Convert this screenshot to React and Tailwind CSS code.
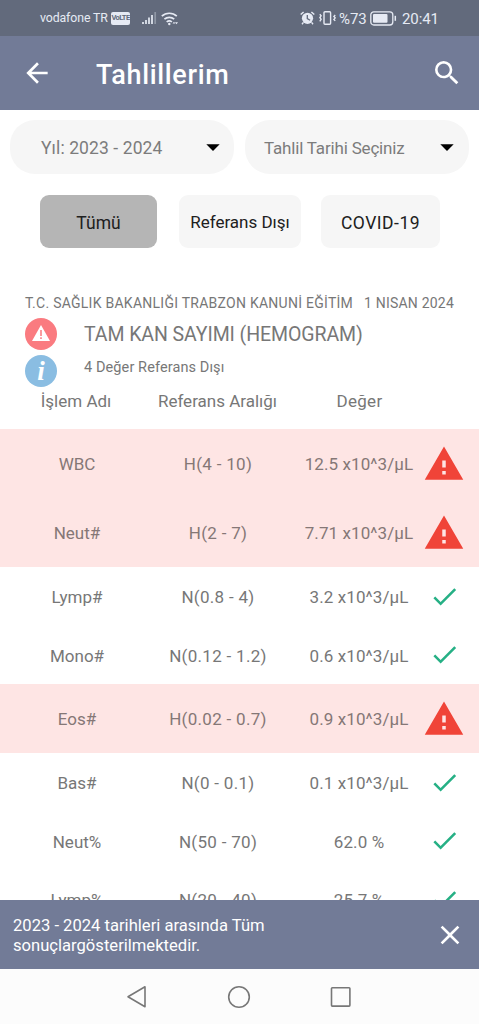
import React from 'react';
import { MdArrowBack, MdArrowDropDown, MdCheck, MdClose, MdSearch, MdWarning } from 'react-icons/md';

const results = [
  { name: 'WBC', range: 'H(4 - 10)', value: '12.5 x10^3/µL', alert: true },
  { name: 'Neut#', range: 'H(2 - 7)', value: '7.71 x10^3/µL', alert: true },
  { name: 'Lymp#', range: 'N(0.8 - 4)', value: '3.2 x10^3/µL' },
  { name: 'Mono#', range: 'N(0.12 - 1.2)', value: '0.6 x10^3/µL' },
  { name: 'Eos#', range: 'H(0.02 - 0.7)', value: '0.9 x10^3/µL', alert: true },
  { name: 'Bas#', range: 'N(0 - 0.1)', value: '0.1 x10^3/µL' },
  { name: 'Neut%', range: 'N(50 - 70)', value: '62.0 %' },
  { name: 'Lymp%', range: 'N(20 - 40)', value: '25.7 %' },
];

const StatusBar = () => (
  <div className="h-9 shrink-0 bg-[#626a7c] text-[#e6eaf4] flex items-center justify-between pl-10 pr-[40px]">
    <div className="flex items-center">
      <span className="text-[12.3px] w-[69px] tracking-[-0.1px] whitespace-nowrap pt-px">vodafone TR</span>
      <span className="ml-[2px] w-[19px] h-[13px] rounded-[2px] bg-[#e6eaf4] text-[#626a7c] text-[7.5px] font-bold tracking-[-0.6px] flex items-center justify-center">VoLTE</span>
      <svg className="ml-3 w-[15px] h-[14px]" viewBox="0 0 15 14" fill="none" stroke="currentColor" strokeWidth="1.7">
        <path d="M1 13v-2M4 13V9M7 13V6.5M10 13V4" />
        <path d="M13.2 13V1" opacity="0.35" />
      </svg>
      <svg className="ml-1 w-[18px] h-[15px]" viewBox="0 0 18 15" fill="none" stroke="currentColor" strokeWidth="1.7">
        <path d="M.8 5.2a11 11 0 0 1 15 0M3.4 8.2a7.2 7.2 0 0 1 9.8 0M5.7 11a3.8 3.8 0 0 1 5.2 0" />
        <circle cx="8.3" cy="13" r="1.2" fill="currentColor" stroke="none" />
        <path d="M11.5 12.6l1.5-1.8 1.4 1.8zM14 11.2h3l-1.5 2z" fill="currentColor" stroke="none" />
      </svg>
    </div>
    <div className="flex items-center">
      <svg className="w-[15px] h-[14px]" viewBox="0 0 15 14" fill="none" stroke="currentColor">
        <circle cx="7.5" cy="7.3" r="5.6" fill="currentColor" stroke="none" />
        <path d="M.7 3.6L3.6.9M14.3 3.6L11.4.9M3.4 11.4L2 13.2M11.6 11.4l1.4 1.8" strokeWidth="1.4" />
        <path d="M7.3 4v3.6l2.8 1.6" stroke="#626a7c" strokeWidth="1.3" />
      </svg>
      <svg className="ml-1 w-[17px] h-[14px]" viewBox="0 0 17 14" fill="none" stroke="currentColor" strokeWidth="1.4">
        <rect x="5" y=".8" width="6.6" height="12.4" rx="1" />
        <path d="M.8 3.2l1.3 1.6L.9 6.5l1.2 1.8-1.3 2M16.2 4l-1.3 1.4 1.3 1.5-1.3 1.5 1.3 1.5" />
      </svg>
      <span className="ml-[3px] w-[29px] text-[15px] tracking-[-0.1px] pt-[2px]">%73</span>
      <svg className="ml-[2px] w-[27px] h-[15px]" viewBox="0 0 27 15" fill="none" stroke="currentColor">
        <rect x=".8" y=".8" width="22" height="13.2" rx="3" strokeWidth="1.3" />
        <rect x="3" y="3" width="14.5" height="8.8" rx="1" fill="currentColor" stroke="none" />
        <path d="M25.3 4.8v5" strokeWidth="1.5" />
      </svg>
      <span className="ml-[5px] w-[37px] text-[15px] tracking-[-0.1px] pt-[2px]">20:41</span>
    </div>
  </div>
);

const Header = () => (
  <header className="h-[74px] shrink-0 bg-[#727b97] text-white flex items-center pl-[21px] pr-4">
    <MdArrowBack size={32} />
    <h1 className="ml-[43px] flex-1 text-[27px] font-medium tracking-[0.65px] leading-none pt-[5px]">Tahlillerim</h1>
    <MdSearch size={32} />
  </header>
);

const SelectBox = ({ label, className }) => (
  <div className={`w-[224px] h-[54px] rounded-[25px] bg-[#f6f6f6] flex items-center justify-between text-[#7c7c7c] whitespace-nowrap ${className}`}>
    <span className="pt-[3px]">{label}</span>
    <MdArrowDropDown size={32} className="text-black" />
  </div>
);

const ResultRow = ({ name, range, value, alert }) => (
  <div
    className={`grid grid-cols-[154px_128px_154px_16px] items-center text-center text-[17px] shrink-0 ${
      alert ? 'h-[69px] bg-[#fee5e4] text-[#857776]' : 'h-[58.5px] text-[#777]'
    }`}
  >
    <span className="pt-[3px]">{name}</span>
    <span className="pt-[3px] tracking-[0.3px]">{range}</span>
    <span className="pt-[3px] tracking-[0.1px]">{value}</span>
    <span className="flex justify-center">
      {alert ? (
        <MdWarning size={42} className="shrink-0 text-[#f04438]" />
      ) : (
        <MdCheck size={31} className="shrink-0 text-[#26b085]" />
      )}
    </span>
  </div>
);

const App = () => {
  return (
    <div className="w-[479px] h-[1024px] overflow-hidden bg-white flex flex-col font-['Roboto',sans-serif]">
      <StatusBar />
      <Header />

      <main className="h-[790px] shrink-0 overflow-hidden flex flex-col">
        <div className="flex gap-[11px] px-[10px] pt-[10px]">
          <SelectBox label="Yıl: 2023 - 2024" className="pl-[31px] pr-[5px] text-[17.5px] tracking-[0.1px]" />
          <SelectBox label="Tahlil Tarihi Seçiniz" className="pl-[19px] pr-[6px] text-[17px] tracking-[-0.18px]" />
        </div>

        <div className="flex pl-10 pt-[21px] text-[17.5px] text-[#202020]">
          <button className="w-[117px] h-[53px] pt-[3px] rounded-[9px] bg-[#b5b5b5]">Tümü</button>
          <button className="ml-[22px] w-[122px] h-[53px] pt-[3px] rounded-[9px] bg-[#f6f6f6] text-[17px] whitespace-nowrap">Referans Dışı</button>
          <button className="ml-5 w-[119px] h-[53px] pt-[3px] rounded-[9px] bg-[#f6f6f6] tracking-[0.5px]">COVID-19</button>
        </div>

        <section className="pt-[45px] pl-[25px] text-[#777]">
          <div className="h-5 flex items-center justify-between pr-[25px] text-[14px] whitespace-nowrap">
            <span className="tracking-[0.26px]">T.C. SAĞLIK BAKANLIĞI TRABZON KANUNİ EĞİTİM</span>
            <span className="tracking-[0.2px]">1 NISAN 2024</span>
          </div>
          <div className="mt-[4px] flex items-center h-[33px]">
            <span className="w-8 h-8 rounded-full bg-[#fa7b80] flex items-center justify-center">
              <svg className="w-[18px] h-4 mb-[2px]" viewBox="0 0 18 16">
                <path d="M9 0l9 16H0z" fill="#fff" />
                <path d="M9 5v6M9 12.2v1.8" stroke="#fa7b80" strokeWidth="1.5" />
              </svg>
            </span>
            <h2 className="ml-[27px] pt-[3px] text-[19.5px] tracking-[-0.08px]">TAM KAN SAYIMI (HEMOGRAM)</h2>
          </div>
          <div className="mt-[5px] flex h-8">
            <span className="w-8 h-8 rounded-full bg-[#8abde2] text-white flex items-center justify-center font-['Liberation_Serif',serif] italic font-bold text-[27px]">i</span>
            <span className="ml-[27px] text-[14.5px] tracking-[0.1px] leading-[25px]">4 Değer Referans Dışı</span>
          </div>
        </section>

        <div className="h-[42px] shrink-0 pb-[12px] grid grid-cols-[152px_131px_153px] items-center text-center text-[17px] text-[#777] whitespace-nowrap">
          <span>İşlem Adı</span>
          <span>Referans Aralığı</span>
          <span className="tracking-[0.3px]">Değer</span>
        </div>

        {results.map((row) => (
          <ResultRow key={row.name} {...row} />
        ))}
      </main>

      <div className="h-[69px] shrink-0 bg-[#727b97] text-white flex items-center justify-between pl-[13px] pr-[13px]">
        <p className="text-[16.6px] leading-[20px] w-[300px] pt-[3px]">
          2023 - 2024 tarihleri arasında Tüm
          <br />
          sonuçlargösterilmektedir.
        </p>
        <MdClose size={32} />
      </div>

      <nav className="flex-1 bg-[#fcfcfc] flex items-center justify-center gap-[78px] pr-px text-[#777]">
        <svg className="w-6 h-6" viewBox="0 0 24 24" fill="none" stroke="currentColor" strokeWidth="1.6" strokeLinejoin="round">
          <path d="M20 1.8v20L3 11.8z" />
        </svg>
        <svg className="w-6 h-6" viewBox="0 0 24 24" fill="none" stroke="currentColor" strokeWidth="1.6">
          <circle cx="12" cy="12" r="10.3" />
        </svg>
        <svg className="w-6 h-6" viewBox="0 0 24 24" fill="none" stroke="currentColor" strokeWidth="1.6">
          <rect x="2.5" y="2.7" width="18.4" height="18.4" rx=".8" />
        </svg>
      </nav>
    </div>
  );
};

export default App;
